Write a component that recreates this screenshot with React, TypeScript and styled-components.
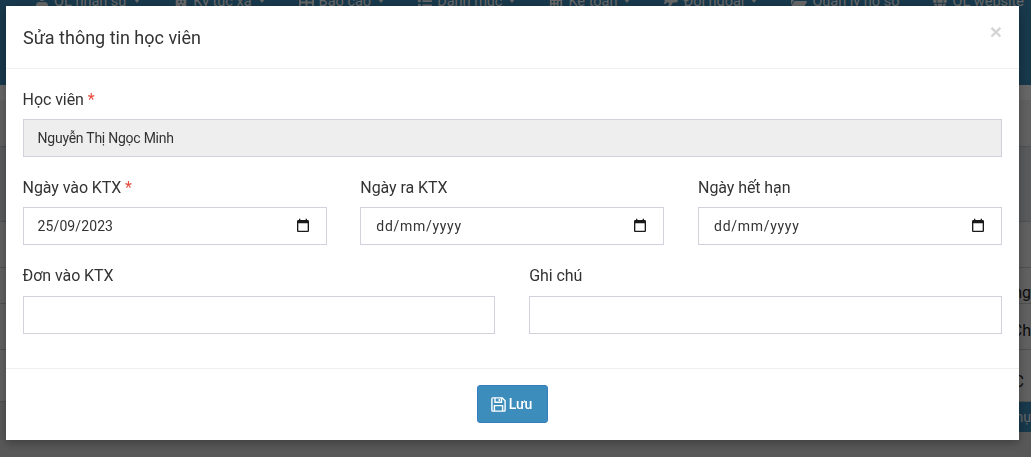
import React from 'react';
import styled, { createGlobalStyle } from 'styled-components';
import { FaBuilding, FaCalculator, FaFolderOpen, FaGlobe, FaList, FaPlane, FaTable, FaUser } from 'react-icons/fa';

const GlobalStyle = createGlobalStyle`
  * {
    box-sizing: border-box;
  }
  html,
  body {
    margin: 0;
    height: 457px;
    overflow: hidden;
    font-family: Roboto, "Liberation Sans", sans-serif;
    background: #dcdcdc;
  }
`;

const Page = styled.div`
  height: 457px;
  overflow: hidden;
  background: #dcdcdc;
`;

const NavBar = styled.nav`
  height: 85px;
  background: #3c8dbc;
  display: flex;
  align-items: flex-start;
  gap: 34px;
  padding-left: 35px;
`;

const NavItem = styled.div`
  display: flex;
  align-items: center;
  gap: 5px;
  height: 14px;
  margin-top: -6px;
  font-size: 14.5px;
  color: #ffffff;
  white-space: nowrap;
`;

const Caret = styled.span`
  width: 0;
  height: 0;
  border-left: 3.5px solid transparent;
  border-right: 3.5px solid transparent;
  border-top: 4px solid #ffffff;
  margin-left: 2px;
`;

const WhiteBand = styled.div`
  height: 15px;
  background: #ffffff;
`;

const TableRow = styled.div<{ $h: number; $bg?: string; $right?: number; $pad?: number }>`
  height: ${(p) => p.$h}px;
  background: ${(p) => p.$bg || '#f0f0f0'};
  border-bottom: 1px solid #c8c8c8;
  display: flex;
  justify-content: flex-end;
  align-items: center;
  padding-right: ${(p) => p.$right || 0}px;
  padding-top: ${(p) => p.$pad || 0}px;
  font-size: 16px;
  color: #222222;
  white-space: nowrap;
`;

const TableButton = styled.div`
  height: 30px;
  width: 60px;
  margin-left: auto;
  background: #3c8dbc;
  color: #ffffff;
  font-size: 14px;
  display: flex;
  justify-content: flex-end;
  align-items: center;
  overflow: hidden;
  white-space: nowrap;
`;

const Backdrop = styled.div`
  position: fixed;
  inset: 0;
  background: rgba(0, 0, 0, 0.6);
`;

const Modal = styled.div`
  position: fixed;
  left: 6px;
  top: 6px;
  width: 1013px;
  height: 434px;
  background: #ffffff;
  display: flex;
  flex-direction: column;
  box-shadow: 0 3px 9px rgba(0, 0, 0, 0.3);
`;

const Header = styled.header`
  height: 63px;
  flex: none;
  display: flex;
  align-items: center;
  justify-content: space-between;
  padding: 0 17px;
  border-bottom: 1px solid #f0f0f0;
`;

const Title = styled.h4`
  margin: 0;
  font-size: 18px;
  font-weight: 400;
  color: #333333;
`;

const Close = styled.button`
  border: 0;
  padding: 0;
  background: none;
  font-family: "Liberation Sans", sans-serif;
  font-size: 21px;
  font-weight: 700;
  line-height: 1;
  color: #d4d4d4;
  margin-top: -12px;
`;

const Body = styled.div`
  flex: 1;
  padding: 19.6px 17px 0 16.6px;
  display: flex;
  flex-direction: column;
  gap: 20.2px;
`;

const Row = styled.div<{ $cols: number }>`
  display: grid;
  grid-template-columns: repeat(${(p) => p.$cols}, 1fr);
  column-gap: 33.8px;
`;

const Field = styled.div`
  display: flex;
  flex-direction: column;
  gap: 7.8px;
`;

const Label = styled.label`
  font-size: 16px;
  line-height: 22.4px;
  letter-spacing: -0.08px;
  color: #333333;
`;

const Required = styled.span`
  color: #e74c3c;
`;

const Input = styled.input`
  width: 100%;
  height: 38px;
  padding: 0 14px;
  border: 1px solid #d2d2de;
  border-radius: 0;
  background: #ffffff;
  outline: none;
  font-family: Roboto, "Liberation Sans", sans-serif;
  font-size: 14px;
  letter-spacing: -0.25px;
  color: #333333;

  &:disabled {
    background: #eeeeee;
    color: #333333;
    opacity: 1;
  }
`;

const DateBox = styled.div`
  height: 38px;
  display: flex;
  align-items: center;
  padding: 0 15px 0 14px;
  border: 1px solid #d2d2de;
  background: #ffffff;
  color: #1a1a1a;
`;

const DateInput = styled.input`
  flex: 1;
  min-width: 0;
  height: 100%;
  padding: 0;
  border: 0;
  outline: none;
  background: none;
  font-family: Roboto, "Liberation Sans", sans-serif;
  font-size: 14px;
  letter-spacing: 0.1px;
  color: #333333;

  &:placeholder-shown {
    padding-left: 1px;
  }

  &::placeholder {
    color: #333333;
    opacity: 1;
    letter-spacing: 0.7px;
  }
`;

const Footer = styled.footer`
  height: 72px;
  flex: none;
  display: flex;
  justify-content: center;
  align-items: flex-start;
  padding-top: 16px;
  border-top: 1px solid #f0f0f0;
`;

const SaveButton = styled.button`
  width: 71px;
  height: 38px;
  display: flex;
  align-items: center;
  justify-content: center;
  gap: 3px;
  padding: 0 2px 0 0;
  border: 1px solid #357ebd;
  border-radius: 3px;
  background: #3c8dbc;
  color: #ffffff;
  font-family: Roboto, "Liberation Sans", sans-serif;
  font-size: 14px;
  font-weight: 500;
`;

const CalendarIcon = () => (
  <svg width="16" height="16" viewBox="0 0 24 24" fill="currentColor">
    <path d="M19 3h-1V1h-2v2H8V1H6v2H5c-1.11 0-2 .9-2 2v14c0 1.1.89 2 2 2h14c1.1 0 2-.9 2-2V5c0-1.1-.9-2-2-2zm0 16H5V8h14v11z" />
  </svg>
);

const SaveIcon = () => (
  <svg width="15" height="15" viewBox="0 0 15 15" fill="none" stroke="currentColor" strokeWidth="1.4">
    <path d="M1.7 .9h9.6l2.8 2.8v9.6a.8.8 0 0 1-.8.8H1.7a.8.8 0 0 1-.8-.8V1.7a.8.8 0 0 1 .8-.8z" />
    <path d="M4 1v4.3h6.5V1" />
    <path d="M8.3 2v2" />
    <path d="M3.4 14V8.6h8.2V14" />
  </svg>
);

const navItems = [
  { icon: <FaUser size={14} />, label: 'QL nhân sự', caret: true },
  { icon: <FaBuilding size={14} />, label: 'Ký túc xá', caret: true },
  { icon: <FaTable size={15} />, label: 'Báo cáo', caret: true },
  { icon: <FaList size={14} />, label: 'Danh mục', caret: true },
  { icon: <FaCalculator size={14} />, label: 'Kế toán', caret: true },
  { icon: <FaPlane size={14} />, label: 'Đối ngoại', caret: true },
  { icon: <FaFolderOpen size={16} />, label: 'Quản lý hồ sơ', caret: false },
  { icon: <FaGlobe size={14} />, label: 'QL website', caret: false },
];

const App: React.FC = () => (
  <>
    <GlobalStyle />
    <Page>
      <NavBar>
        {navItems.map((item) => (
          <NavItem key={item.label}>
            {item.icon}
            {item.label}
            {item.caret && <Caret />}
          </NavItem>
        ))}
      </NavBar>
      <WhiteBand />
      <TableRow $h={47} />
      <TableRow $h={75} $bg="#dce1e6" />
      <TableRow $h={46} />
      <TableRow $h={36} $pad={14}>
        ng
      </TableRow>
      <TableRow $h={46} $pad={8}>
        Ch
      </TableRow>
      <TableRow $h={52} $right={7} $pad={12}>
        C
      </TableRow>
      <TableButton>Thụ</TableButton>
    </Page>
    <Backdrop />
    <Modal>
      <Header>
        <Title>Sửa thông tin học viên</Title>
        <Close type="button">×</Close>
      </Header>
      <Body>
        <Field>
          <Label>
            Học viên <Required>*</Required>
          </Label>
          <Input disabled defaultValue="Nguyễn Thị Ngọc Minh" />
        </Field>
        <Row $cols={3}>
          <Field>
            <Label>
              Ngày vào KTX <Required>*</Required>
            </Label>
            <DateBox>
              <DateInput defaultValue="25/09/2023" placeholder="dd/mm/yyyy" />
              <CalendarIcon />
            </DateBox>
          </Field>
          <Field>
            <Label>Ngày ra KTX</Label>
            <DateBox>
              <DateInput placeholder="dd/mm/yyyy" />
              <CalendarIcon />
            </DateBox>
          </Field>
          <Field>
            <Label>Ngày hết hạn</Label>
            <DateBox>
              <DateInput placeholder="dd/mm/yyyy" />
              <CalendarIcon />
            </DateBox>
          </Field>
        </Row>
        <Row $cols={2}>
          <Field>
            <Label>Đơn vào KTX</Label>
            <Input />
          </Field>
          <Field>
            <Label>Ghi chú</Label>
            <Input />
          </Field>
        </Row>
      </Body>
      <Footer>
        <SaveButton type="button">
          <SaveIcon />
          Lưu
        </SaveButton>
      </Footer>
    </Modal>
  </>
);

export default App;
